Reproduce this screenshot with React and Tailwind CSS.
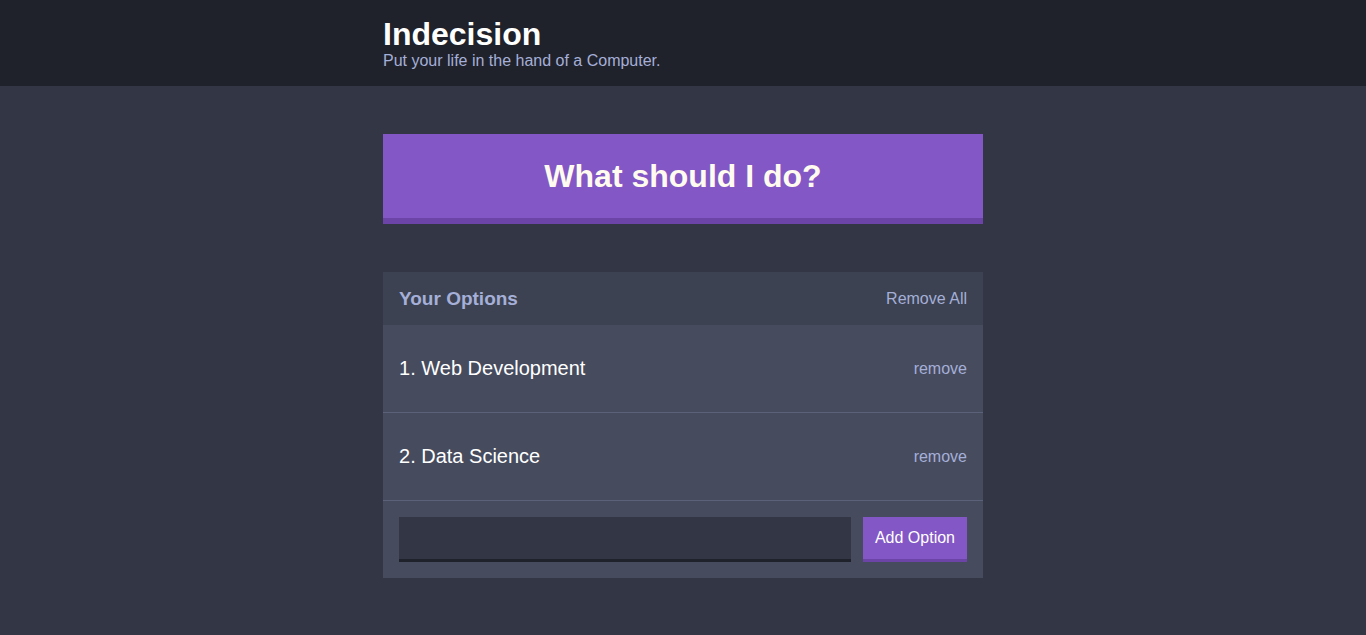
import React, { useState } from "react";

const App = () => {
  const [options, setOptions] = useState(["Web Development", "Data Science"]);
  const [value, setValue] = useState("");

  const addOption = (e) => {
    e.preventDefault();
    if (!value.trim()) return;
    setOptions([...options, value.trim()]);
    setValue("");
  };

  return (
    <div className="min-h-screen bg-[#333745] font-['Liberation_Sans',Arial,sans-serif]">
      {/* Header */}
      <header className="bg-[#20222b] py-4 mb-12">
        <div className="w-[600px] mx-auto">
          <h1 className="text-[32px] leading-[36px] font-bold text-white m-0">Indecision</h1>
          <h2 className="text-[16px] leading-[18px] font-medium text-[#a5afd7] m-0">Put your life in the hand of a Computer.</h2>
        </div>
      </header>

      <div className="w-[600px] mx-auto">
        <button className="w-full bg-[#8357c5] border-b-[6px] border-[#6c43a6] p-6 text-[32px] leading-[36px] font-bold text-[#fffbee] mb-12">
          What should I do?
        </button>

        {/* Options widget */}
        <div className="bg-[#464b5e]">
          <div className="bg-[#3c4251] p-4 flex items-center justify-between">
            <h3 className="text-[19px] leading-[21px] font-bold text-[#a5afd7]">Your Options</h3>
            <button onClick={() => setOptions([])} className="text-[16px] leading-[18px] text-[#a5afd7]">Remove All</button>
          </div>

          {options.map((opt, i) => (
            <div key={i} className="flex items-center justify-between p-4 border-b border-[#5b6178]">
              <p className="text-[20px] leading-[23px] text-white my-4">{i + 1}. {opt}</p>
              <button
                onClick={() => setOptions(options.filter((_, j) => j !== i))}
                className="text-[16px] leading-[18px] text-[#a5afd7]"
              >
                remove
              </button>
            </div>
          ))}

          <form onSubmit={addOption} className="flex p-4">
            <input
              value={value}
              onChange={(e) => setValue(e.target.value)}
              className="flex-1 mr-3 bg-[#333745] border-b-[3px] border-[#20222b] p-2 text-[#a5afd7] outline-none"
            />
            <button className="bg-[#8357c5] border-b-[3px] border-[#6c43a6] px-3 py-3 text-[16px] leading-[18px] text-white">
              Add Option
            </button>
          </form>
        </div>
      </div>
    </div>
  );
};

export default App;
